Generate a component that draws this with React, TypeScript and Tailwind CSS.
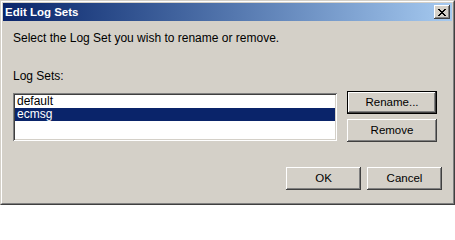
import React from "react";

const raised =
  "shadow-[inset_-1px_-1px_#404040,inset_1px_1px_#ffffff,inset_-2px_-2px_#808080,inset_2px_2px_#d4d0c8]";

function Win2kButton({
  label,
  width,
  isDefault,
}: {
  label: string;
  width: string;
  isDefault?: boolean;
}) {
  if (isDefault) {
    return (
      <div className={`${width} h-[23px] border border-black`}>
        <button
          className={`w-full h-full bg-[#d4d0c8] ${raised} text-[11.5px] leading-[13px] text-black`}
        >
          {label}
        </button>
      </div>
    );
  }
  return (
    <button
      className={`${width} h-[23px] bg-[#d4d0c8] ${raised} text-[11.5px] leading-[13px] text-black`}
    >
      {label}
    </button>
  );
}

function CloseGlyph() {
  // pixel X as drawn by the classic caption button
  const rows = [
    "xx....xx",
    ".xx..xx.",
    "..xxxx..",
    "...xx...",
    "..xxxx..",
    ".xx..xx.",
    "xx....xx",
  ];
  return (
    <svg width="8" height="7" viewBox="0 0 8 7" shapeRendering="crispEdges">
      {rows.flatMap((r, y) =>
        r.split("").map((c, x) =>
          c === "x" ? <rect key={`${x}-${y}`} x={x} y={y} width="1" height="1" fill="#000" /> : null
        )
      )}
    </svg>
  );
}

export default function App() {
  const items = ["default", "ecmsg"];
  const selected = 1;

  return (
    <div
      className="w-[455px] h-[205px] bg-[#d4d0c8] border border-t-[#d4d0c8] border-l-[#d4d0c8] border-r-[#404040] border-b-[#404040] text-black"
      style={{ fontFamily: "Tahoma, 'Liberation Sans', Arial, sans-serif" }}
    >
      <div className="h-full border border-t-white border-l-white border-r-[#808080] border-b-[#808080] p-[1px] flex flex-col">
        {/* title bar */}
        <div className="h-[18px] shrink-0 flex items-center justify-between pl-[2px] pr-[2px] bg-gradient-to-r from-[#0a246a] to-[#a6caf0]">
          <span className="text-white font-bold text-[11.5px] leading-[13px]">Edit Log Sets</span>
          <div className={`w-[16px] h-[14px] bg-[#d4d0c8] ${raised} flex items-center justify-center`}>
            <CloseGlyph />
          </div>
        </div>

        {/* body */}
        <div className="flex-1 pl-[10px] pr-[10px] pt-[11px] text-[12px] leading-[13px]">
          <p className="h-[13px]">Select the Log Set you wish to rename or remove.</p>
          <p className="h-[13px] mt-[25px]">Log Sets:</p>

          <div className="flex mt-[8px]">
            <div className="mt-[2px] w-[324px] h-[48px] bg-white shadow-[inset_1px_1px_#808080,inset_-1px_-1px_#ffffff,inset_2px_2px_#404040,inset_-2px_-2px_#d4d0c8] p-[2px]">
              {items.map((it, i) => (
                <div
                  key={it}
                  className={`h-[13px] pl-[2px] ${
                    i === selected ? "bg-[#0a246a] text-white" : "text-black"
                  }`}
                >
                  {it}
                </div>
              ))}
            </div>
            <div className="ml-[10px] flex flex-col gap-[5px]">
              <Win2kButton label="Rename..." width="w-[90px]" isDefault />
              <Win2kButton label="Remove" width="w-[90px]" />
            </div>
          </div>

          <div className="flex justify-end gap-[6px] mt-[25px]">
            <Win2kButton label="OK" width="w-[75px]" />
            <Win2kButton label="Cancel" width="w-[75px]" />
          </div>
        </div>
      </div>
    </div>
  );
}
